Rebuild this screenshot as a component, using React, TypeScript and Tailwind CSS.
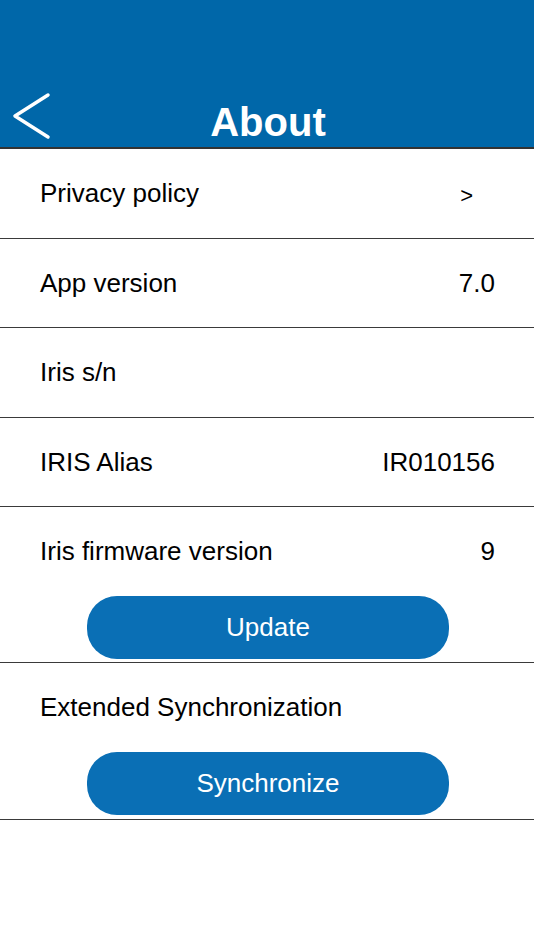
import React from 'react';

const font = { fontFamily: '"Liberation Sans", Arial, sans-serif' };

interface RowProps {
  label: string;
  value?: string;
  valueClass?: string;
  tall?: boolean;
}

const Row: React.FC<RowProps> = ({ label, value, valueClass = '', tall = true }) => (
  <div
    className={`flex items-center justify-between pl-[40px] pr-[39px] text-[26px] text-black ${
      tall ? 'h-[89px]' : 'h-[88px]'
    }`}
  >
    <span>{label}</span>
    {value && <span className={valueClass}>{value}</span>}
  </div>
);

const Divider = () => <div className="h-px bg-[#3a3a3a]" />;

const ActionButton: React.FC<{ label: string }> = ({ label }) => (
  <div className="flex">
    <button
      type="button"
      className="ml-[87px] h-[63px] w-[362px] rounded-[30px] bg-[#0a6fb5] text-[26px] text-white"
    >
      {label}
    </button>
  </div>
);

export default function App() {
  return (
    <div className="min-h-[950px] w-[534px] bg-white" style={font}>
      {/* Header */}
      <div className="flex h-[147px] flex-col justify-end bg-[#0067a9]">
        <div className="relative flex h-[60px] items-center justify-center pt-[10px]">
          <svg
            className="absolute left-[12px] top-[5px]"
            width="40"
            height="48"
            viewBox="0 0 40 48"
            fill="none"
          >
            <path d="M36 3 L3 24 L36 45" stroke="white" strokeWidth="3.5" strokeLinecap="round" strokeLinejoin="round" />
          </svg>
          <h1 className="ml-[2px] text-[40px] font-bold text-white">About</h1>
        </div>
      </div>
      <div className="h-[2px] bg-[#333333]" />

      <Row label="Privacy policy" value=">" valueClass="mr-[22px] text-[22px] pt-[4px]" />
      <Divider />
      <Row label="App version" value="7.0" tall={false} />
      <Divider />
      <Row label="Iris s/n" />
      <Divider />
      <Row label="IRIS Alias" value="IR010156" tall={false} />
      <Divider />
      <Row label="Iris firmware version" value="9" />
      <div className="pb-[3px]">
        <ActionButton label="Update" />
      </div>
      <Divider />
      <Row label="Extended Synchronization" />
      <div className="pb-[4px]">
        <ActionButton label="Synchronize" />
      </div>
      <Divider />
    </div>
  );
}
